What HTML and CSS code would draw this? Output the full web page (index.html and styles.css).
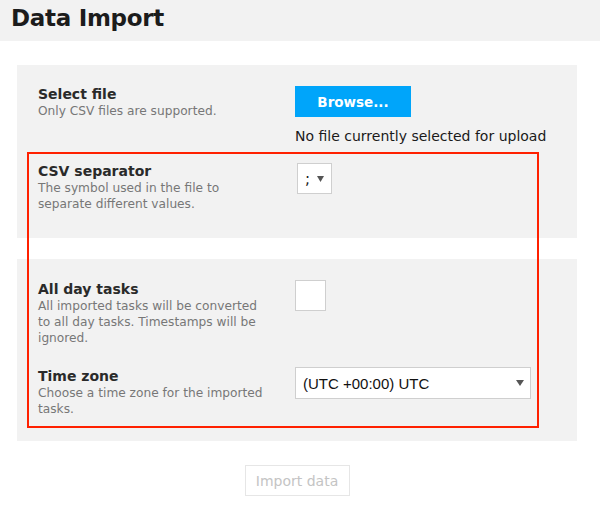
FILE: index.html
```html
<!DOCTYPE html>
<html>
<head>
<meta charset="utf-8">
<link rel="stylesheet" href="styles.css">
</head>
<body>
<header class="page-head"><h1>Data Import</h1></header>
<main class="content">
  <section class="panel panel-first">
    <div class="row row-file">
      <div class="label-col">
        <div class="label">Select file</div>
        <div class="desc">Only CSV files are supported.</div>
      </div>
      <div class="control-col">
        <button class="browse">Browse...</button>
        <div class="file-status">No file currently selected for upload</div>
      </div>
    </div>
    <div class="row row-sep">
      <div class="label-col">
        <div class="label">CSV separator</div>
        <div class="desc">The symbol used in the file to<br>separate different values.</div>
      </div>
      <div class="control-col">
        <div class="select select-small"><span class="sel-text">;</span><svg class="arrow" width="7" height="6" viewBox="0 0 7 6"><path d="M0 0 L7 0 L3.5 6 Z" fill="#555"/></svg></div>
      </div>
    </div>
  </section>
  <section class="panel panel-second">
    <div class="row row-allday">
      <div class="label-col">
        <div class="label">All day tasks</div>
        <div class="desc">All imported tasks will be converted<br>to all day tasks. Timestamps will be<br>ignored.</div>
      </div>
      <div class="control-col">
        <div class="checkbox"></div>
      </div>
    </div>
    <div class="row row-tz">
      <div class="label-col">
        <div class="label">Time zone</div>
        <div class="desc">Choose a time zone for the imported<br>tasks.</div>
      </div>
      <div class="control-col">
        <div class="select select-wide"><span class="sel-text tz">(UTC +00:00) UTC</span><svg class="arrow" width="8" height="6" viewBox="0 0 8 6"><path d="M0 0 L8 0 L4 6 Z" fill="#555"/></svg></div>
      </div>
    </div>
  </section>
  <div class="actions"><button class="import">Import data</button></div>
  <div class="highlight"></div>
</main>
</body>
</html>
```
FILE: styles.css
```css
html, body { margin: 0; padding: 0; background: #fff; }
body { font-family: "DejaVu Sans", Verdana, sans-serif; color: #222; width: 600px; height: 506px; overflow: hidden; position: relative; }
.page-head { background: #f2f2f2; height: 41px; }
.page-head h1 { margin: 0; padding: 3px 0 0 11px; font-size: 23px; line-height: 30px; font-weight: bold; color: #1c1c1c; letter-spacing: -0.3px; }
.content { padding: 24px 0 0 17px; }
.panel { width: 560px; background: #f2f2f2; box-sizing: border-box; padding: 0 21px; }
.panel-first { height: 173px; padding-top: 20px; }
.panel-second { height: 182px; margin-top: 21px; padding-top: 21px; }
.row { display: grid; grid-template-columns: 257px 1fr; }
.label { font-size: 14px; font-weight: bold; line-height: 18px; color: #2a2a2a; }
.desc { font-size: 12.2px; line-height: 16px; color: #777; }
.control-col { display: flex; flex-direction: column; align-items: flex-start; }
.browse { margin-top: 1px; width: 116px; height: 31px; border: 0; background: #00a5fa; color: #fff; font-family: "DejaVu Sans", sans-serif; font-weight: bold; font-size: 13.5px; padding: 0; }
.file-status { margin-top: 11px; font-size: 14px; line-height: 16px; color: #1a1a1a; white-space: nowrap; }
.row-sep { margin-top: 18px; }
.row-sep .control-col { padding-top: 1px; padding-left: 2px; }
.select { display: flex; align-items: center; justify-content: space-between; background: #fff; border: 1px solid #cfcfcf; box-sizing: border-box; }
.select-small { width: 35px; height: 31px; padding: 0 7px 0 7px; }
.select-small .sel-text { font-size: 15px; color: #222; }
.select-wide { width: 236px; height: 32px; padding: 0 6px 0 7px; }
.sel-text.tz { font-family: "Liberation Sans", Arial, sans-serif; font-size: 15px; color: #111; }
.checkbox { width: 31px; height: 31px; background: #fff; border: 1px solid #cfcfcf; box-sizing: border-box; }
.row-tz { margin-top: 21px; }
.actions { display: flex; justify-content: center; padding-top: 24px; width: 560px; }
.import { width: 105px; height: 31px; background: #fff; border: 1px solid #e6e6e6; color: #c4c4c4; font-family: "DejaVu Sans", sans-serif; font-size: 14px; padding: 0; }
.highlight { position: absolute; left: 27px; top: 152px; width: 512px; height: 276px; border: 2px solid #ff2000; box-sizing: border-box; }
```
